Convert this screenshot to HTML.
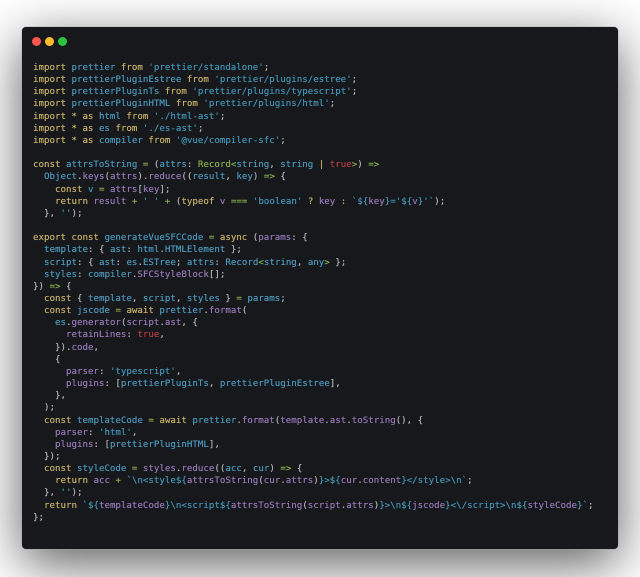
<!DOCTYPE html>
<html><head><meta charset="utf-8">
<style>
html,body{margin:0;padding:0;width:640px;height:577px;overflow:hidden;background:#fff}
#wrap{position:absolute;left:0;top:0;width:640px;height:577px;overflow:hidden;background:#fff}
#win{position:absolute;left:22px;top:27px;width:596px;height:522px;background:#16181b;border-radius:4px;box-shadow:0 0 0 .5px rgba(170,170,170,.7),0 14px 52px rgba(0,0,0,.65)}
.d{position:absolute;top:9.5px;width:9px;height:9px;border-radius:50%}
pre{position:absolute;left:11px;top:35px;margin:0;font:9.15px/12.15px "DejaVu Sans Mono","Liberation Mono",monospace;color:#aeb0b2;white-space:pre;filter:blur(.35px);text-shadow:0 0 .4px currentColor}
.k{color:#c4ad68}.b{color:#4b95b8}.p{color:#9476b4}.g{color:#87ac4d}.r{color:#b03d40}.s{color:#4191b2}
</style></head><body><div id="wrap"><div id="win">
<div class="d" style="left:9.5px;background:#fc5753"></div>
<div class="d" style="left:22.5px;background:#fdbc2e"></div>
<div class="d" style="left:35.5px;background:#2ac53f"></div>
<pre><span class="k">import</span> <span class="b">prettier</span> <span class="k">from</span> <span class="s">'prettier/standalone'</span>;
<span class="k">import</span> <span class="b">prettierPluginEstree</span> <span class="k">from</span> <span class="s">'prettier/plugins/estree'</span>;
<span class="k">import</span> <span class="b">prettierPluginTs</span> <span class="k">from</span> <span class="s">'prettier/plugins/typescript'</span>;
<span class="k">import</span> <span class="b">prettierPluginHTML</span> <span class="k">from</span> <span class="s">'prettier/plugins/html'</span>;
<span class="k">import * as</span> <span class="b">html</span> <span class="k">from</span> <span class="s">'./html-ast'</span>;
<span class="k">import * as</span> <span class="b">es</span> <span class="k">from</span> <span class="s">'./es-ast'</span>;
<span class="k">import * as</span> <span class="b">compiler</span> <span class="k">from</span> <span class="s">'@vue/compiler-sfc'</span>;

<span class="k">const</span> <span class="b">attrsToString</span> <span class="g">=</span> (<span class="b">attrs</span>: <span class="g">Record&lt;</span><span class="b">string</span>, <span class="b">string</span> <span class="k">|</span> <span class="r">true</span><span class="g">&gt;</span>) <span class="g">=&gt;</span>
  <span class="b">Object</span>.<span class="p">keys</span>(<span class="p">attrs</span>).<span class="p">reduce</span>((<span class="b">result</span>, <span class="b">key</span>) <span class="g">=&gt;</span> {
    <span class="k">const</span> <span class="b">v</span> <span class="g">=</span> <span class="p">attrs</span>[<span class="p">key</span>];
    <span class="k">return</span> <span class="p">result</span> <span class="g">+</span> <span class="s">' '</span> <span class="g">+</span> (<span class="k">typeof</span> <span class="p">v</span> <span class="g">===</span> <span class="s">'boolean'</span> <span class="k">?</span> <span class="p">key</span> <span class="k">:</span> <span class="s">`${</span><span class="p">key</span><span class="s">}='${</span><span class="p">v</span><span class="s">}'`</span>);
  }, <span class="s">''</span>);

<span class="k">export const</span> <span class="b">generateVueSFCCode</span> <span class="g">=</span> <span class="k">async</span> (<span class="p">params</span>: {
  <span class="b">template</span>: { <span class="b">ast</span>: <span class="b">html</span>.<span class="b">HTMLElement</span> };
  <span class="b">script</span>: { <span class="b">ast</span>: <span class="b">es</span>.<span class="b">ESTree</span>; <span class="b">attrs</span>: <span class="b">Record</span><span class="g">&lt;</span><span class="b">string</span>, <span class="b">any</span><span class="g">&gt;</span> };
  <span class="b">styles</span>: <span class="b">compiler</span>.<span class="p">SFCStyleBlock</span>[];
}) <span class="g">=&gt;</span> {
  <span class="k">const</span> { <span class="b">template</span>, <span class="b">script</span>, <span class="b">styles</span> } <span class="g">=</span> <span class="b">params</span>;
  <span class="k">const</span> <span class="b">jscode</span> <span class="g">=</span> <span class="k">await</span> <span class="b">prettier</span>.<span class="p">format</span>(
    <span class="b">es</span>.<span class="p">generator</span>(<span class="p">script</span>.<span class="p">ast</span>, {
      <span class="p">retainLines</span>: <span class="r">true</span>,
    }).<span class="p">code</span>,
    {
      <span class="p">parser</span>: <span class="s">'typescript'</span>,
      <span class="p">plugins</span>: [<span class="b">prettierPluginTs</span>, <span class="b">prettierPluginEstree</span>],
    },
  );
  <span class="k">const</span> <span class="b">templateCode</span> <span class="g">=</span> <span class="k">await</span> <span class="b">prettier</span>.<span class="p">format</span>(<span class="p">template</span>.<span class="p">ast</span>.<span class="p">toString</span>(), {
    <span class="p">parser</span>: <span class="s">'html'</span>,
    <span class="p">plugins</span>: [<span class="b">prettierPluginHTML</span>],
  });
  <span class="k">const</span> <span class="b">styleCode</span> <span class="g">=</span> <span class="p">styles</span>.<span class="p">reduce</span>((<span class="b">acc</span>, <span class="b">cur</span>) <span class="g">=&gt;</span> {
    <span class="k">return</span> <span class="p">acc</span> <span class="g">+</span> <span class="s">`\n&lt;style${</span><span class="p">attrsToString</span>(<span class="p">cur</span>.<span class="p">attrs</span>)<span class="s">}&gt;${</span><span class="p">cur</span>.<span class="p">content</span><span class="s">}&lt;/style&gt;\n`</span>;
  }, <span class="s">''</span>);
  <span class="k">return</span> <span class="s">`${</span><span class="p">templateCode</span><span class="s">}\n&lt;script${</span><span class="p">attrsToString</span>(<span class="p">script</span>.<span class="p">attrs</span>)<span class="s">}&gt;\n${</span><span class="p">jscode</span><span class="s">}&lt;\/script&gt;\n${</span><span class="p">styleCode</span><span class="s">}`</span>;
};</pre>
</div></div></body></html>
